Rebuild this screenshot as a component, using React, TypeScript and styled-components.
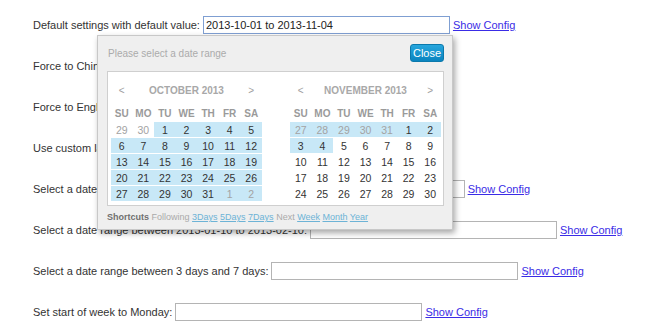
import styled, { createGlobalStyle } from 'styled-components';

const GlobalStyle = createGlobalStyle`
  body {
    margin: 0;
    background: #ffffff;
    font-family: 'Liberation Sans', Arial, sans-serif;
    font-size: 11px;
    color: #333333;
  }
`;

type Day = { n: number; out?: boolean; sel?: boolean };

const weekDays = ['SU', 'MO', 'TU', 'WE', 'TH', 'FR', 'SA'];

const buildMonth = (
  prevStart: number,
  prevDays: number,
  days: number,
  selFrom: number,
  selTo: number,
  trailing: number,
  trailingSel: boolean,
  leadingSel: boolean,
): Day[][] => {
  const cells: Day[] = [];
  for (let d = prevStart; d <= prevDays; d++) cells.push({ n: d, out: true, sel: leadingSel });
  for (let d = 1; d <= days; d++) cells.push({ n: d, sel: d >= selFrom && d <= selTo });
  for (let d = 1; d <= trailing; d++) cells.push({ n: d, out: true, sel: trailingSel });
  const rows: Day[][] = [];
  for (let i = 0; i < cells.length; i += 7) rows.push(cells.slice(i, i + 7));
  return rows;
};

const months = [
  { title: 'OCTOBER 2013', rows: buildMonth(29, 30, 31, 1, 31, 2, true, false) },
  { title: 'NOVEMBER 2013', rows: buildMonth(27, 31, 30, 1, 4, 0, false, true) },
];

const rows = [
  { label: 'Default settings with default value:', value: '2013-10-01 to 2013-11-04', focused: true },
  { label: 'Force to Chinese:', value: '' },
  { label: 'Force to English:', value: '' },
  { label: 'Use custom labels:', value: '' },
  { label: 'Select a date range before this week:', value: '' },
  { label: 'Select a date range between 2013-01-10 to 2013-02-10:', value: '' },
  { label: 'Select a date range between 3 days and 7 days:', value: '' },
  { label: 'Set start of week to Monday:', value: '' },
];

export default function App() {
  return (
    <>
      <GlobalStyle />
      <Page>
        {rows.map((r) => (
          <Row key={r.label}>
            <Label>{r.label}</Label>
            <Field $focused={!!r.focused} defaultValue={r.value} readOnly />
            <ConfigLink href="#">Show Config</ConfigLink>
          </Row>
        ))}
        <Picker>
          <PickerTop>
            <Hint>Please select a date range</Hint>
            <CloseButton>Close</CloseButton>
          </PickerTop>
          <Calendars>
            {months.map((m) => (
              <Month key={m.title}>
                <MonthHead>
                  <Nav>&lt;</Nav>
                  <MonthTitle>{m.title}</MonthTitle>
                  <Nav>&gt;</Nav>
                </MonthHead>
                <WeekRow>
                  {weekDays.map((w) => (
                    <WeekDay key={w}>{w}</WeekDay>
                  ))}
                </WeekRow>
                {m.rows.map((row, i) => (
                  <DayRow key={i}>
                    {row.map((d, j) => (
                      <DayCell key={j} $sel={!!d.sel}>
                        <DayNum $out={!!d.out}>{d.n}</DayNum>
                      </DayCell>
                    ))}
                  </DayRow>
                ))}
              </Month>
            ))}
          </Calendars>
          <Shortcuts>
            <b>Shortcuts</b> Following <a href="#">3Days</a> <a href="#">5Days</a>{' '}
            <a href="#">7Days</a> Next <a href="#">Week</a> <a href="#">Month</a>{' '}
            <a href="#">Year</a>
          </Shortcuts>
        </Picker>
      </Page>
    </>
  );
}

const Page = styled.div`
  position: relative;
  height: 330px;
  overflow: hidden;
  padding: 16px 0 0 33px;
  box-sizing: border-box;
  display: flex;
  flex-direction: column;
  gap: 23px;
`;

const Row = styled.div`
  display: flex;
  align-items: center;
  height: 18px;
  white-space: nowrap;
`;

const Label = styled.span`
  color: #333333;
`;

const Field = styled.input<{ $focused: boolean }>`
  box-sizing: border-box;
  width: 247px;
  height: 18px;
  margin: 0 0 0 3px;
  padding: 0 2px;
  border: 1px solid ${(p) => (p.$focused ? '#7f9fd2' : '#b4b4b4')};
  font-family: 'Liberation Sans', Arial, sans-serif;
  font-size: 11px;
  color: #222222;
  outline: none;
`;

const ConfigLink = styled.a`
  margin-left: 3px;
  color: #3a2ce6;
  text-decoration: underline;
`;

const Picker = styled.div`
  position: absolute;
  left: 97px;
  top: 35px;
  width: 356px;
  height: 195px;
  box-sizing: border-box;
  background: #efefef;
  border: 1px solid #c8c8c8;
  box-shadow: 2px 3px 6px rgba(0, 0, 0, 0.35);
  padding: 8px 8px 0 9px;
  font-size: 10px;
`;

const PickerTop = styled.div`
  display: flex;
  align-items: center;
  justify-content: space-between;
  height: 18px;
`;

const Hint = styled.span`
  color: #ababab;
  padding-left: 1px;
`;

const CloseButton = styled.button`
  box-sizing: border-box;
  width: 34px;
  height: 18px;
  padding: 0;
  border: 1px solid #0b79ac;
  border-radius: 3px;
  background: linear-gradient(#27a6dd, #0a84bf);
  color: #ffffff;
  font-family: 'Liberation Sans', Arial, sans-serif;
  font-size: 11px;
`;

const Calendars = styled.div`
  margin-top: 9px;
  height: 135px;
  box-sizing: border-box;
  background: #ffffff;
  border: 1px solid #cfcfcf;
  display: flex;
  gap: 28px;
  padding: 10px 0 0 3px;
`;

const Month = styled.div`
  width: 151px;
  display: flex;
  flex-direction: column;
  gap: 1px;
`;

const MonthHead = styled.div`
  display: grid;
  grid-template-columns: 1fr 5fr 1fr;
  height: 16px;
  align-items: center;
  margin-bottom: 7px;
`;

const Nav = styled.span`
  text-align: center;
  color: #a0a0a0;
`;

const MonthTitle = styled.span`
  text-align: center;
  color: #a8a8a8;
  font-weight: bold;
`;

const WeekRow = styled.div`
  display: grid;
  grid-template-columns: repeat(7, 1fr);
  height: 15px;
  align-items: center;
`;

const WeekDay = styled.span`
  text-align: center;
  color: #9a9a9a;
  font-weight: bold;
`;

const DayRow = styled.div`
  display: grid;
  grid-template-columns: repeat(7, 1fr);
  height: 15px;
`;

const DayCell = styled.div<{ $sel: boolean }>`
  display: flex;
  align-items: center;
  justify-content: center;
  background: ${(p) => (p.$sel ? '#c8e8f7' : 'transparent')};
`;

const DayNum = styled.span<{ $out: boolean }>`
  font-size: 10.5px;
  color: ${(p) => (p.$out ? '#a3a3a3' : '#333333')};
`;

const Shortcuts = styled.div`
  margin-top: 6px;
  color: #aaaaaa;
  font-size: 9px;
  b {
    color: #707070;
  }
  a {
    color: #6db3d6;
    text-decoration: underline;
  }
`;
